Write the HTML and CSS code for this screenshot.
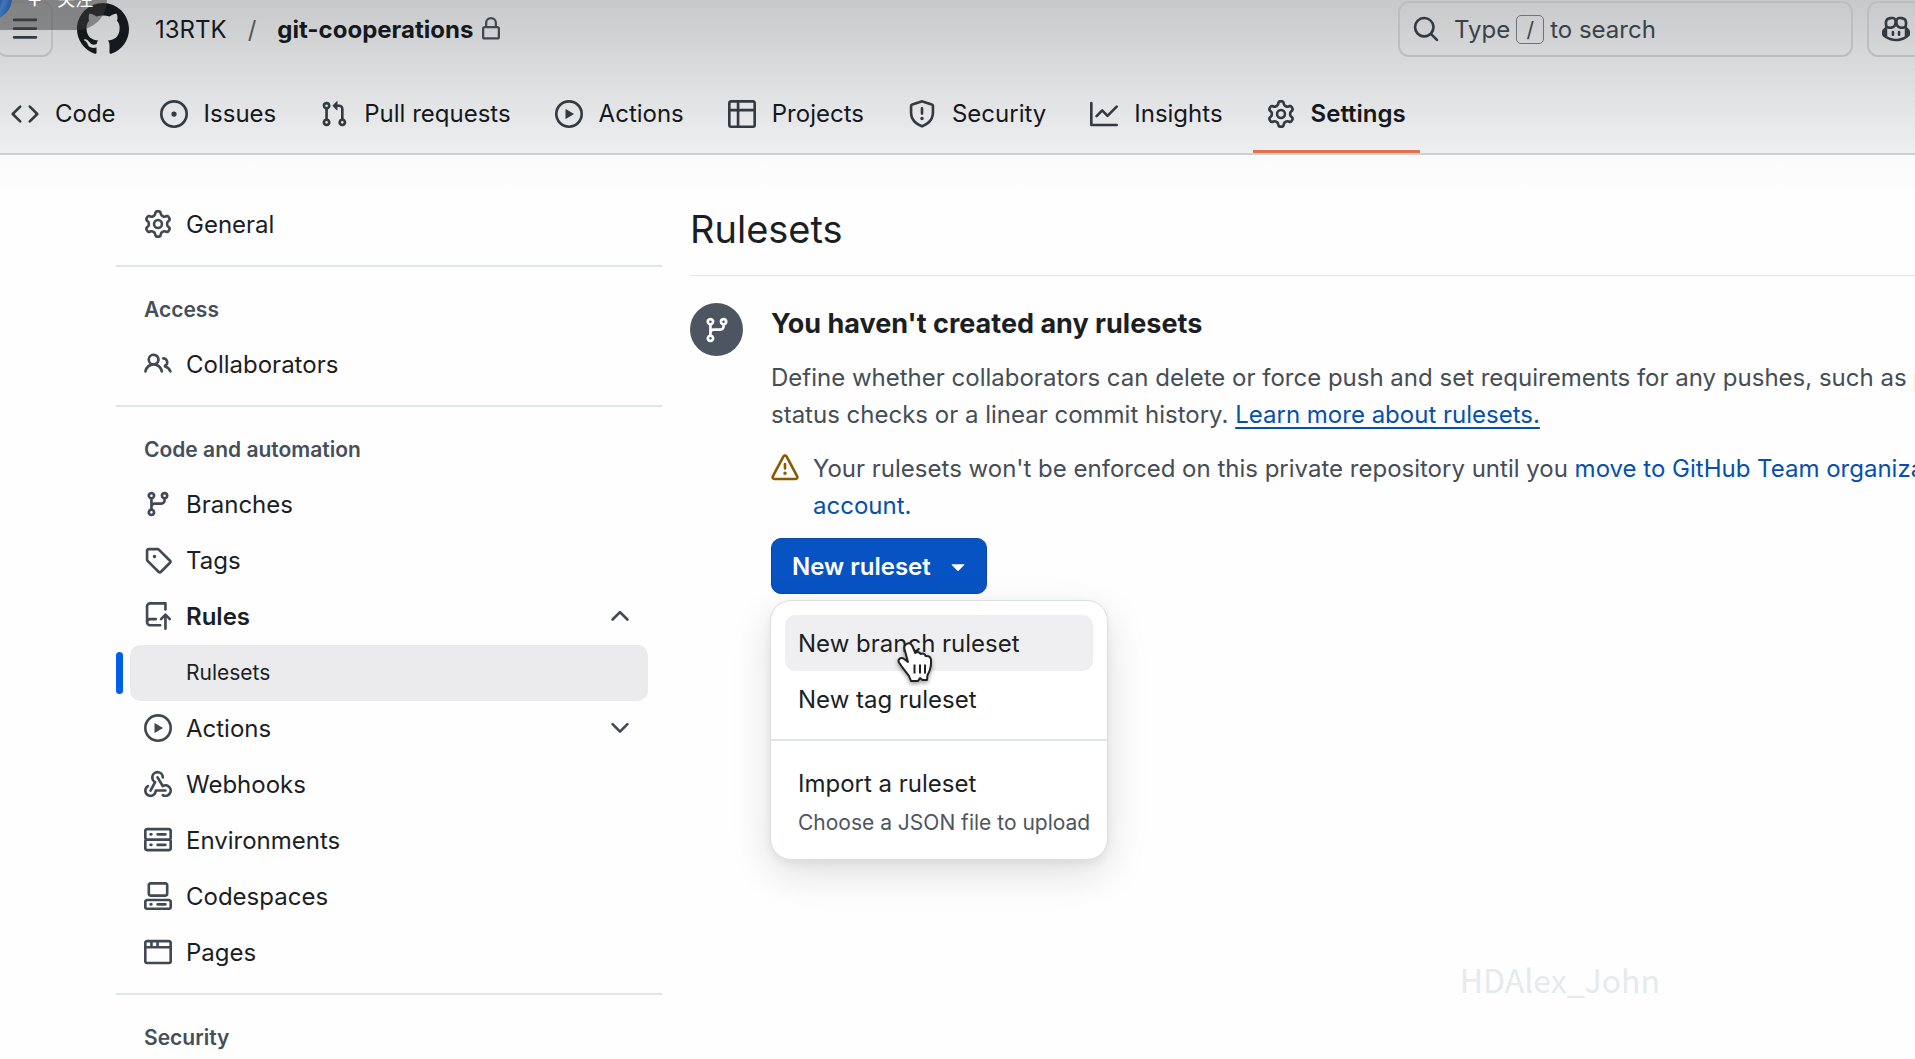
FILE: index.html
```html
<!DOCTYPE html>
<html lang="en">
<head>
<meta charset="utf-8">
<title>Rulesets · 13RTK/git-cooperations</title>
<link rel="stylesheet" href="styles.css">
</head>
<body>
<svg class="sprite" aria-hidden="true">
  <symbol id="gear" viewBox="0 0 16 16"><path d="M8 0a8.2 8.2 0 0 1 .701.031C9.444.095 9.99.645 10.16 1.29l.288 1.107c.018.066.079.158.212.224.231.114.454.243.668.386.123.082.233.09.299.071l1.103-.303c.644-.176 1.392.021 1.82.63.27.385.506.792.704 1.218.315.675.111 1.422-.364 1.891l-.814.806c-.049.048-.098.147-.088.294.016.257.016.515 0 .772-.01.147.038.246.088.294l.814.806c.475.469.679 1.216.364 1.891a7.977 7.977 0 0 1-.704 1.217c-.428.61-1.176.807-1.82.63l-1.102-.302c-.067-.019-.177-.011-.3.071a5.909 5.909 0 0 1-.668.386c-.133.066-.194.158-.211.224l-.29 1.106c-.168.646-.715 1.196-1.458 1.26a8.006 8.006 0 0 1-1.402 0c-.743-.064-1.289-.614-1.458-1.26l-.289-1.106c-.018-.066-.079-.158-.212-.224a5.738 5.738 0 0 1-.668-.386c-.123-.082-.233-.09-.299-.071l-1.103.303c-.644.176-1.392-.021-1.82-.63a8.12 8.12 0 0 1-.704-1.218c-.315-.675-.111-1.422.363-1.891l.815-.806c.05-.048.098-.147.088-.294a6.214 6.214 0 0 1 0-.772c.01-.147-.038-.246-.088-.294l-.815-.806C.635 6.045.431 5.298.746 4.623a7.92 7.92 0 0 1 .704-1.217c.428-.61 1.176-.807 1.82-.63l1.102.302c.067.019.177.011.3-.071.214-.143.437-.272.668-.386.133-.066.194-.158.211-.224l.29-1.106C6.009.645 6.556.095 7.299.03 7.53.01 7.764 0 8 0Zm-.571 1.525c-.036.003-.108.036-.137.146l-.289 1.105c-.147.561-.549.967-.998 1.189-.173.086-.34.183-.5.29-.417.278-.97.423-1.529.27l-1.103-.303c-.109-.03-.175.016-.195.045-.22.312-.412.644-.573.99-.014.031-.021.11.059.19l.815.806c.411.406.562.957.53 1.456a4.709 4.709 0 0 0 0 .582c.032.499-.119 1.05-.53 1.456l-.815.806c-.081.08-.073.159-.059.19.162.346.353.677.573.989.02.03.085.076.195.046l1.102-.303c.56-.153 1.113-.008 1.53.27.161.107.328.204.501.29.447.222.85.629.997 1.189l.289 1.105c.029.109.101.143.137.146a6.6 6.6 0 0 0 1.142 0c.036-.003.108-.036.137-.146l.289-1.105c.147-.561.549-.967.998-1.189.173-.086.34-.183.5-.29.417-.278.97-.423 1.529-.27l1.103.303c.109.029.175-.016.195-.045.22-.313.411-.644.573-.99.014-.031.021-.11-.059-.19l-.815-.806c-.411-.406-.562-.957-.53-1.456a4.709 4.709 0 0 0 0-.582c-.032-.499.119-1.05.53-1.456l.815-.806c.081-.08.073-.159.059-.19a6.464 6.464 0 0 0-.573-.989c-.02-.03-.085-.076-.195-.046l-1.102.303c-.56.153-1.113.008-1.53-.27a4.44 4.44 0 0 0-.501-.29c-.447-.222-.85-.629-.997-1.189l-.289-1.105c-.029-.11-.101-.143-.137-.146a6.6 6.6 0 0 0-1.142 0ZM11 8a3 3 0 1 1-6 0 3 3 0 0 1 6 0ZM9.5 8a1.5 1.5 0 1 0-3.001.001A1.5 1.5 0 0 0 9.5 8Z"/></symbol>
  <symbol id="mark" viewBox="0 0 16 16"><path d="M8 0c4.42 0 8 3.58 8 8a8.013 8.013 0 0 1-5.45 7.59c-.4.08-.55-.17-.55-.38 0-.27.01-1.13.01-2.2 0-.75-.25-1.23-.54-1.48 1.78-.2 3.65-.88 3.65-3.95 0-.88-.31-1.59-.82-2.15.08-.2.36-1.02-.08-2.12 0 0-.67-.22-2.2.82-.64-.18-1.32-.27-2-.27-.68 0-1.36.09-2 .27-1.53-1.03-2.2-.82-2.2-.82-.44 1.1-.16 1.92-.08 2.12-.51.56-.82 1.28-.82 2.15 0 3.06 1.86 3.75 3.64 3.95-.23.2-.44.55-.51 1.07-.46.21-1.61.55-2.33-.66-.15-.24-.6-.83-1.23-.82-.67.01-.27.38.01.53.34.19.73.9.82 1.13.16.45.68 1.31 2.69.94 0 .67.01 1.3.01 1.49 0 .21-.15.45-.55.38A7.995 7.995 0 0 1 0 8c0-4.42 3.58-8 8-8Z"/></symbol>
  <symbol id="lock" viewBox="0 0 16 16"><path d="M4 4a4 4 0 0 1 8 0v2h.25c.966 0 1.75.784 1.75 1.75v5.5A1.75 1.75 0 0 1 12.25 15h-8.5A1.75 1.75 0 0 1 2 13.25v-5.5C2 6.784 2.784 6 3.75 6H4Zm8.25 3.5h-8.5a.25.25 0 0 0-.25.25v5.5c0 .138.112.25.25.25h8.5a.25.25 0 0 0 .25-.25v-5.5a.25.25 0 0 0-.25-.25ZM10.5 6V4a2.5 2.5 0 1 0-5 0v2Z"/></symbol>
  <symbol id="menu" viewBox="0 0 16 16"><path d="M1 2.75A.75.75 0 0 1 1.75 2h12.5a.75.75 0 0 1 0 1.500H1.750A.75.75 0 0 1 1 2.750Zm0 5A.75.75 0 0 1 1.750 7h12.500a.75.75 0 0 1 0 1.500H1.750A.75.75 0 0 1 1 7.750ZM1.750 12h12.500a.75.75 0 0 1 0 1.500H1.750a.75.75 0 0 1 0-1.500Z"/></symbol>
  <symbol id="search" viewBox="0 0 16 16"><path d="M10.680 11.740a6 6 0 0 1-7.922-8.982 6 6 0 0 1 8.982 7.922l3.040 3.040a.749.749 0 0 1-.326 1.275.749.749 0 0 1-.734-.215ZM11.500 7a4.499 4.499 0 1 0-8.997 0A4.499 4.499 0 0 0 11.500 7Z"/></symbol>
  <symbol id="copilot" viewBox="0 0 16 16"><path d="M7.998 15.035c-4.562 0-7.873-2.914-7.998-3.749V9.338c.085-.628.677-1.686 1.588-2.065.013-.07.024-.143.036-.218.029-.183.060-.384.126-.612-.201-.508-.254-1.084-.254-1.656 0-.87.128-1.769.693-2.484.579-.733 1.494-1.124 2.724-1.261 1.206-.134 2.262.034 2.944.765.050.053.096.108.139.165.044-.057.094-.112.143-.165.682-.731 1.738-.899 2.944-.765 1.230.137 2.145.528 2.724 1.261.566.715.693 1.614.693 2.484 0 .572-.053 1.148-.254 1.656.066.228.098.429.126.612.012.076.024.148.037.218.924.385 1.522 1.471 1.591 2.095v1.872c0 .766-3.351 3.795-8.002 3.795Zm0-1.485c2.280 0 4.584-1.110 5.002-1.433V7.862l-.023-.116c-.490.210-1.075.291-1.727.291-1.146 0-2.059-.327-2.710-.991A3.222 3.222 0 0 1 8 6.303a3.240 3.240 0 0 1-.544.743c-.650.664-1.563.991-2.710.991-.652 0-1.236-.081-1.727-.291l-.023.116v4.255c.419.323 2.722 1.433 5.002 1.433ZM6.762 2.830c-.193-.206-.637-.413-1.682-.297-1.019.113-1.479.404-1.713.700-.247.312-.369.789-.369 1.554 0 .793.129 1.171.308 1.371.162.181.519.379 1.442.379.853 0 1.339-.235 1.638-.540.315-.322.527-.827.617-1.553.117-.935-.037-1.395-.241-1.614Zm4.155-.297c-1.044-.116-1.488.091-1.681.297-.204.219-.359.679-.242 1.614.091.726.303 1.231.618 1.553.299.305.784.540 1.638.540.922 0 1.280-.198 1.442-.379.179-.200.308-.578.308-1.371 0-.765-.123-1.242-.370-1.554-.233-.296-.693-.587-1.713-.700ZM6.250 9.037a.75.75 0 0 1 .75.75v1.501a.75.75 0 0 1-1.500 0V9.787a.75.75 0 0 1 .75-.75Zm4.250.75v1.501a.75.75 0 0 1-1.500 0V9.787a.75.75 0 0 1 1.500 0Z"/></symbol>
  <symbol id="code" viewBox="0 0 16 16"><path d="m11.280 3.220 4.250 4.250a.75.75 0 0 1 0 1.060l-4.250 4.250a.749.749 0 0 1-1.275-.326.749.749 0 0 1 .215-.734L13.940 8l-3.720-3.720a.749.749 0 0 1 .326-1.275.749.749 0 0 1 .734.215Zm-6.560 0a.751.751 0 0 1 1.042.018.751.751 0 0 1 .018 1.042L2.060 8l3.720 3.720a.749.749 0 0 1-.326 1.275.749.749 0 0 1-.734-.215L.470 8.530a.75.75 0 0 1 0-1.060Z"/></symbol>
  <symbol id="issue" viewBox="0 0 16 16"><path d="M8 9.500a1.500 1.500 0 1 0 0-3 1.500 1.500 0 0 0 0 3Z"/><path d="M8 0a8 8 0 1 1 0 16A8 8 0 0 1 8 0ZM1.500 8a6.500 6.500 0 1 0 13 0 6.500 6.500 0 0 0-13 0Z"/></symbol>
  <symbol id="pull" viewBox="0 0 16 16"><path d="M1.500 3.250a2.250 2.250 0 1 1 3 2.122v5.256a2.251 2.251 0 1 1-1.500 0V5.372A2.250 2.250 0 0 1 1.500 3.250Zm5.677-.177L9.573.677A.25.25 0 0 1 10 .854V2.500h1A2.500 2.500 0 0 1 13.500 5v5.628a2.251 2.251 0 1 1-1.500 0V5a1 1 0 0 0-1-1h-1v1.646a.25.25 0 0 1-.427.177L7.177 3.427a.25.25 0 0 1 0-.354ZM3.750 2.500a.75.75 0 1 0 0 1.500.75.75 0 0 0 0-1.500Zm0 9.500a.75.75 0 1 0 0 1.500.75.75 0 0 0 0-1.500Zm8.250.75a.75.75 0 1 0 1.500 0 .75.75 0 0 0-1.500 0Z"/></symbol>
  <symbol id="play" viewBox="0 0 16 16"><path d="M8 0a8 8 0 1 1 0 16A8 8 0 0 1 8 0ZM1.500 8a6.500 6.500 0 1 0 13 0 6.500 6.500 0 0 0-13 0Zm4.879-2.773 4.264 2.559a.25.25 0 0 1 0 .428l-4.264 2.559A.25.25 0 0 1 6 10.559V5.442a.25.25 0 0 1 .379-.215Z"/></symbol>
  <symbol id="table" viewBox="0 0 16 16"><path d="M0 1.750C0 .784.784 0 1.750 0h12.500C15.216 0 16 .784 16 1.750v12.500A1.750 1.750 0 0 1 14.250 16H1.750A1.750 1.750 0 0 1 0 14.250ZM6.500 6.500v8h7.750a.25.25 0 0 0 .25-.25V6.500Zm8-1.500V1.750a.25.25 0 0 0-.25-.25H6.500V5Zm-13 1.500v7.750c0 .138.112.25.25.25H5v-8ZM5 5V1.500H1.750a.25.25 0 0 0-.25.25V5Z"/></symbol>
  <symbol id="shield" viewBox="0 0 16 16"><path d="M7.467.133a1.748 1.748 0 0 1 1.066 0l5.250 1.680A1.750 1.750 0 0 1 15 3.480V7c0 1.566-.320 3.182-1.303 4.682-.983 1.498-2.585 2.813-5.032 3.855a1.697 1.697 0 0 1-1.330 0c-2.447-1.042-4.049-2.357-5.032-3.855C1.320 10.182 1 8.566 1 7V3.480a1.750 1.750 0 0 1 1.217-1.667Zm.610 1.429a.25.25 0 0 0-.153 0l-5.250 1.680a.25.25 0 0 0-.174.238V7c0 1.358.275 2.666 1.057 3.860.784 1.194 2.121 2.340 4.366 3.297a.196.196 0 0 0 .154 0c2.245-.956 3.582-2.104 4.366-3.298C13.225 9.666 13.500 8.360 13.500 7V3.480a.251.251 0 0 0-.174-.237l-5.250-1.680ZM8.750 4.750v3a.75.75 0 0 1-1.500 0v-3a.75.75 0 0 1 1.500 0ZM9 10.500a1 1 0 1 1-2 0 1 1 0 0 1 2 0Z"/></symbol>
  <symbol id="graph" viewBox="0 0 16 16"><path d="M1.500 1.750V13.500h13.750a.75.75 0 0 1 0 1.500H.75a.75.75 0 0 1-.75-.75V1.750a.75.75 0 0 1 1.500 0Zm14.280 2.530-5.250 5.250a.75.75 0 0 1-1.060 0L7 7.060 4.280 9.780a.751.751 0 0 1-1.042-.018.751.751 0 0 1-.018-1.042l3.250-3.250a.75.75 0 0 1 1.060 0L10 7.940l4.720-4.720a.751.751 0 0 1 1.042.018.751.751 0 0 1 .018 1.042Z"/></symbol>
  <symbol id="people" viewBox="0 0 16 16"><path d="M2 5.500a3.500 3.500 0 1 1 5.898 2.549 5.508 5.508 0 0 1 3.034 4.084.75.75 0 1 1-1.482.235 4 4 0 0 0-7.900 0 .75.75 0 0 1-1.482-.236A5.507 5.507 0 0 1 3.102 8.050 3.493 3.493 0 0 1 2 5.500ZM11 4a3.001 3.001 0 0 1 2.220 5.018 5.010 5.010 0 0 1 2.560 3.012.749.749 0 0 1-.885.954.752.752 0 0 1-.549-.514 3.507 3.507 0 0 0-2.522-2.372.75.75 0 0 1-.574-.730v-.352a.75.75 0 0 1 .416-.672A1.500 1.500 0 0 0 11 5.500.75.75 0 0 1 11 4Zm-5.500-.5a2 2 0 1 0-.001 3.999A2 2 0 0 0 5.500 3.500Z"/></symbol>
  <symbol id="branch" viewBox="0 0 16 16"><path d="M9.500 3.250a2.250 2.250 0 1 1 3 2.122V6A2.500 2.500 0 0 1 10 8.500H6a1 1 0 0 0-1 1v1.128a2.251 2.251 0 1 1-1.500 0V5.372a2.250 2.250 0 1 1 1.500 0v1.836A2.493 2.493 0 0 1 6 7h4a1 1 0 0 0 1-1v-.628A2.250 2.250 0 0 1 9.500 3.250Zm-6 0a.75.75 0 1 0 1.500 0 .75.75 0 0 0-1.500 0Zm8.250-.75a.75.75 0 1 0 0 1.500.75.75 0 0 0 0-1.500ZM4.250 12a.75.75 0 1 0 0 1.500.75.75 0 0 0 0-1.500Z"/></symbol>
  <symbol id="tag" viewBox="0 0 16 16"><path d="M1 7.775V2.750C1 1.784 1.784 1 2.750 1h5.025c.464 0 .910.184 1.238.513l6.250 6.250a1.750 1.750 0 0 1 0 2.474l-5.026 5.026a1.750 1.750 0 0 1-2.474 0l-6.250-6.250A1.752 1.752 0 0 1 1 7.775Zm1.500 0c0 .066.026.130.073.177l6.250 6.250a.25.25 0 0 0 .354 0l5.025-5.025a.25.25 0 0 0 0-.354l-6.250-6.250a.25.25 0 0 0-.177-.073H2.750a.25.25 0 0 0-.25.25ZM6 5a1 1 0 1 1 0 2 1 1 0 0 1 0-2Z"/></symbol>
  <symbol id="repo-push" viewBox="0 0 16 16"><path d="M1 2.500A2.500 2.500 0 0 1 3.500 0h8.750a.75.75 0 0 1 .75.75v3.500a.75.75 0 0 1-1.500 0V1.500h-8a1 1 0 0 0-1 1v6.708A2.493 2.493 0 0 1 3.500 9h3.250a.75.75 0 0 1 0 1.500H3.500a1 1 0 0 0 0 2h5.750a.75.75 0 0 1 0 1.500H3.500A2.500 2.500 0 0 1 1 11.500Zm13.230 7.790h-.001l-1.224-1.224v6.184a.75.75 0 0 1-1.500 0V9.066L10.280 10.290a.75.75 0 0 1-1.060-1.061l2.505-2.504a.75.75 0 0 1 1.060 0L15.290 9.230a.751.751 0 0 1-.018 1.042.751.751 0 0 1-1.042.018Z"/></symbol>
  <symbol id="webhook" viewBox="0 0 16 16"><path d="M5.500 4.250a2.250 2.250 0 0 1 4.500 0 .75.75 0 0 0 1.500 0 3.750 3.750 0 1 0-6.140 2.889l-2.272 4.258a.75.75 0 0 0 1.324.706L7 7.250a.75.75 0 0 0-.309-1.015A2.250 2.250 0 0 1 5.500 4.250Z"/><path d="M7.364 3.607a.75.75 0 0 1 1.030.257l2.608 4.349a3.750 3.750 0 1 1-.628 6.785.75.75 0 0 1 .752-1.299 2.250 2.250 0 1 0-.033-3.880.75.75 0 0 1-1.030-.256L7.107 4.636a.75.75 0 0 1 .257-1.030Z"/><path d="M2.900 8.776A.75.75 0 0 1 2.625 9.800 2.250 2.250 0 1 0 6 11.750a.75.75 0 0 1 .75-.751h5.500a.75.75 0 0 1 0 1.500H7.425a3.751 3.751 0 1 1-5.550-3.998.75.75 0 0 1 1.024.274Z"/></symbol>
  <symbol id="server" viewBox="0 0 16 16"><path d="M1.750 1h12.500c.966 0 1.750.784 1.750 1.750v4c0 .372-.116.717-.314 1 .198.283.314.628.314 1v4a1.750 1.750 0 0 1-1.750 1.750H1.750A1.750 1.750 0 0 1 0 12.750v-4c0-.358.109-.707.314-1a1.739 1.739 0 0 1-.314-1v-4C0 1.784.784 1 1.750 1ZM1.500 2.750v4c0 .138.112.25.25.25h12.500a.25.25 0 0 0 .25-.25v-4a.25.25 0 0 0-.25-.25H1.750a.25.25 0 0 0-.25.25Zm.25 5.750a.25.25 0 0 0-.25.25v4c0 .138.112.25.25.25h12.500a.25.25 0 0 0 .25-.25v-4a.25.25 0 0 0-.25-.25ZM7 4.750A.75.75 0 0 1 7.750 4h4.500a.75.75 0 0 1 0 1.500h-4.500A.75.75 0 0 1 7 4.750ZM7.750 10h4.500a.75.75 0 0 1 0 1.500h-4.500a.75.75 0 0 1 0-1.500ZM3 4.750A.75.75 0 0 1 3.750 4h.5a.75.75 0 0 1 0 1.500h-.5A.75.75 0 0 1 3 4.750ZM3.750 10h.5a.75.75 0 0 1 0 1.500h-.5a.75.75 0 0 1 0-1.500Z"/></symbol>
  <symbol id="codespaces" viewBox="0 0 16 16"><path d="M0 11.250c0-.966.784-1.750 1.750-1.750h12.500c.966 0 1.750.784 1.750 1.750v3A1.750 1.750 0 0 1 14.250 16H1.750A1.750 1.750 0 0 1 0 14.250Zm2-9.500C2 .784 2.784 0 3.750 0h8.500C13.216 0 14 .784 14 1.750v5a1.750 1.750 0 0 1-1.750 1.750h-8.500A1.750 1.750 0 0 1 2 6.750Zm1.750-.25a.25.25 0 0 0-.25.25v5c0 .138.112.25.25.25h8.500a.25.25 0 0 0 .25-.25v-5a.25.25 0 0 0-.25-.25Zm-2 9.500a.25.25 0 0 0-.25.25v3c0 .138.112.25.25.25h12.500a.25.25 0 0 0 .25-.25v-3a.25.25 0 0 0-.25-.25Z"/><path d="M7 12.750a.75.75 0 0 1 .75-.75h4.500a.75.75 0 0 1 0 1.500h-4.500a.75.75 0 0 1-.75-.75Zm-4 0a.75.75 0 0 1 .75-.75h.5a.75.75 0 0 1 0 1.500h-.5a.75.75 0 0 1-.75-.75Z"/></symbol>
  <symbol id="browser" viewBox="0 0 16 16"><path d="M0 2.750C0 1.784.784 1 1.750 1h12.500c.966 0 1.750.784 1.750 1.750v10.500A1.750 1.750 0 0 1 14.250 15H1.750A1.750 1.750 0 0 1 0 13.250ZM14.500 6h-13v7.250c0 .138.112.25.25.25h12.500a.25.25 0 0 0 .25-.25Zm-6-3.500v2h6V2.750a.25.25 0 0 0-.25-.25ZM5 2.500v2h2v-2Zm-3.250 0a.25.25 0 0 0-.25.25V4.500h2v-2Z"/></symbol>
  <symbol id="chevron-down" viewBox="0 0 16 16"><path d="M12.780 5.220a.749.749 0 0 1 0 1.060l-4.250 4.250a.749.749 0 0 1-1.060 0L3.220 6.280a.749.749 0 1 1 1.060-1.060L8 8.939l3.720-3.719a.749.749 0 0 1 1.060 0Z"/></symbol>
  <symbol id="chevron-up" viewBox="0 0 16 16"><path d="M3.220 10.530a.749.749 0 0 1 0-1.060l4.250-4.250a.749.749 0 0 1 1.060 0l4.250 4.250a.749.749 0 1 1-1.060 1.060L8 6.811 4.280 10.530a.749.749 0 0 1-1.060 0Z"/></symbol>
  <symbol id="alert" viewBox="0 0 16 16"><path d="M6.457 1.047c.659-1.234 2.427-1.234 3.086 0l6.082 11.378A1.750 1.750 0 0 1 14.082 15H1.918a1.750 1.750 0 0 1-1.543-2.575Zm1.763.707a.25.25 0 0 0-.440 0L1.698 13.132a.25.25 0 0 0 .220.368h12.164a.25.25 0 0 0 .220-.368Zm.530 3.996v2.500a.75.75 0 0 1-1.500 0v-2.500a.75.75 0 0 1 1.500 0ZM9 11a1 1 0 1 1-2 0 1 1 0 0 1 2 0Z"/></symbol>
  <symbol id="caret" viewBox="0 0 16 16"><path d="m4.427 7.427 3.396 3.396a.25.25 0 0 0 .354 0l3.396-3.396A.25.25 0 0 0 11.396 7H4.604a.25.25 0 0 0-.177.427Z"/></symbol>
</svg>

<header class="header">
  <div class="topbar">
    <button class="square-button" type="button" aria-label="Open menu"><svg class="icon"><use href="#menu"/></svg></button>
    <a class="logo" href="#" aria-label="Homepage"><svg><use href="#mark"/></svg></a>
    <nav class="crumbs" aria-label="Breadcrumb">
      <a href="#">13RTK</a>
      <span class="slash">/</span>
      <a class="repo" href="#">git-cooperations</a>
      <svg class="lock"><use href="#lock"/></svg>
    </nav>
    <button class="search" type="button"><svg class="icon"><use href="#search"/></svg><span>Type</span><kbd>/</kbd><span>to search</span></button>
    <button class="square-button copilot" type="button" aria-label="Copilot"><svg class="icon"><use href="#copilot"/></svg></button>
  </div>
  <nav class="tabs" aria-label="Repository">
    <a href="#"><svg class="icon"><use href="#code"/></svg>Code</a>
    <a href="#"><svg class="icon"><use href="#issue"/></svg>Issues</a>
    <a href="#"><svg class="icon"><use href="#pull"/></svg>Pull requests</a>
    <a href="#"><svg class="icon"><use href="#play"/></svg>Actions</a>
    <a href="#"><svg class="icon"><use href="#table"/></svg>Projects</a>
    <a href="#"><svg class="icon"><use href="#shield"/></svg>Security</a>
    <a href="#"><svg class="icon"><use href="#graph"/></svg>Insights</a>
    <a class="current" href="#" aria-current="page"><svg class="icon"><use href="#gear"/></svg>Settings</a>
  </nav>
</header>

<div class="layout">
  <nav class="sidebar" aria-label="Settings">
    <ul>
      <li><a class="row" href="#"><svg class="icon"><use href="#gear"/></svg>General</a></li>
    </ul>
    <hr>
    <h2>Access</h2>
    <ul>
      <li><a class="row" href="#"><svg class="icon"><use href="#people"/></svg>Collaborators</a></li>
    </ul>
    <hr>
    <h2>Code and automation</h2>
    <ul>
      <li><a class="row" href="#"><svg class="icon"><use href="#branch"/></svg>Branches</a></li>
      <li><a class="row" href="#"><svg class="icon"><use href="#tag"/></svg>Tags</a></li>
      <li><button class="row open" type="button" aria-expanded="true"><svg class="icon"><use href="#repo-push"/></svg>Rules<svg class="icon chevron"><use href="#chevron-up"/></svg></button></li>
      <li class="selected"><a class="row sub" href="#" aria-current="page">Rulesets</a></li>
      <li><button class="row" type="button" aria-expanded="false"><svg class="icon"><use href="#play"/></svg>Actions<svg class="icon chevron"><use href="#chevron-down"/></svg></button></li>
      <li><a class="row" href="#"><svg class="icon"><use href="#webhook"/></svg>Webhooks</a></li>
      <li><a class="row" href="#"><svg class="icon"><use href="#server"/></svg>Environments</a></li>
      <li><a class="row" href="#"><svg class="icon"><use href="#codespaces"/></svg>Codespaces</a></li>
      <li><a class="row" href="#"><svg class="icon"><use href="#browser"/></svg>Pages</a></li>
    </ul>
    <hr>
    <h2>Security</h2>
  </nav>

  <main class="main">
    <h1>Rulesets</h1>
    <section class="blank">
      <div class="badge"><svg class="icon"><use href="#branch"/></svg></div>
      <div class="content">
        <h2>You haven't created any rulesets</h2>
        <p>Define whether collaborators can delete or force push and set requirements for any pushes, such as passing<br>status checks or a linear commit history. <a class="underlined" href="#">Learn more about rulesets.</a></p>
        <div class="warning">
          <svg class="icon"><use href="#alert"/></svg>
          <p>Your rulesets won't be enforced on this private repository until you <a href="#">move to GitHub Team organization<br>account.</a></p>
        </div>
        <div class="dropdown">
          <button class="primary" type="button" aria-haspopup="true" aria-expanded="true">New ruleset<svg class="icon"><use href="#caret"/></svg></button>
          <div class="menu" role="menu">
            <button class="item active" type="button" role="menuitem">New branch ruleset</button>
            <button class="item" type="button" role="menuitem">New tag ruleset</button>
            <hr>
            <button class="item tall" type="button" role="menuitem">Import a ruleset<small>Choose a JSON file to upload</small></button>
            <svg class="pointer" viewBox="0 0 38 44" aria-hidden="true"><path d="M10 3.500C12 1.500 15 2 16.300 5l3 7c2-1.500 4.500-1 5.200 1 2-1 4.500-.3 5 2 3-.5 5.200 1 5.500 4 .3 6-1 11-3.500 15l-.500 5-4.500 0-2.500-2-2 3h-7l-2-5C10 31 6.500 27 3 21.500c-1.500-3 1.500-5.500 4.500-4l4.500 3.500L8.500 8C8 6 8.500 4.500 10 3.500Z"/><path d="M18.500 23.500v9M24 23.500v9M29 23.500v9"/></svg>
          </div>
        </div>
      </div>
    </section>
  </main>
</div>

<div class="follow"><span class="avatar"></span><span class="plus">+</span><span>关注</span></div>
<div class="watermark">HDAlex_John</div>
</body>
</html>
```

FILE: styles.css
```css
* {
  box-sizing: border-box;
}

body {
  margin: 0;
  overflow: hidden;
  background: linear-gradient(#fafafa, #fefefe 40px) 0 155px no-repeat #fefefe;
  color: #1b1f23;
  font-family: Inter, "Liberation Sans", sans-serif;
  font-size: 24px;
  line-height: 37px;
}

button {
  padding: 0;
  border: 0;
  background: none;
  color: inherit;
  font: inherit;
  text-align: left;
}

a {
  color: #0550ae;
  text-decoration: none;
}

ul {
  margin: 0;
  padding: 0;
  list-style: none;
}

hr {
  height: 2px;
  margin: 0;
  border: 0;
  background: #dfe4e5;
}

.sprite {
  position: absolute;
  width: 0;
  height: 0;
}

.icon {
  flex: none;
  width: 28px;
  height: 28px;
  fill: #414a53;
}

/* Header */

.header {
  padding-top: 1px;
  border-bottom: 2px solid #cbd1d3;
  background: linear-gradient(#c8c9cb, #dcdddf 50%, #eeeff1);
}

.header a {
  color: #15181c;
}

.header .icon {
  fill: #323a42;
}

.topbar {
  display: flex;
  align-items: center;
  height: 56px;
  margin-left: -4px;
}

.square-button {
  display: flex;
  flex: none;
  align-items: center;
  justify-content: center;
  width: 57px;
  height: 56px;
  border: 2px solid #babfc2;
  border-radius: 11px;
}

.logo {
  flex: none;
  height: 52px;
  margin: 0 26px 0 24px;
}

.logo svg {
  width: 52px;
  height: 52px;
  fill: #15181c;
}

.crumbs {
  display: flex;
  align-items: center;
}

.slash {
  margin: 0 21px;
  color: #50575e;
}

.repo {
  font-weight: 700;
}

.lock {
  width: 24px;
  height: 24px;
  margin-left: 6px;
  fill: #41484f;
}

.search {
  display: flex;
  align-items: center;
  gap: 6px;
  width: 455px;
  height: 56px;
  margin: 0 14px 0 auto;
  padding: 0 12px;
  border: 2px solid #babfc2;
  border-radius: 11px;
  color: #3a4249;
}

.search .icon {
  margin-right: 8px;
}

.search kbd {
  width: 28px;
  height: 29px;
  border: 1px solid #6c7379;
  border-radius: 5px;
  font: inherit;
  font-size: 21px;
  line-height: 27px;
  text-align: center;
}

.copilot {
  margin-right: -9px;
}

.tabs {
  display: flex;
  gap: 16px;
  margin: 14px 0 0 -3px;
}

.tabs a {
  display: flex;
  align-items: center;
  gap: 16px;
  height: 82px;
  padding: 6px 14px 0;
  border-bottom: 3px solid transparent;
}

.tabs .current {
  border-color: #e0704f;
  font-weight: 600;
}

/* Layout */

.layout {
  display: grid;
  grid-template-columns: 546px 1fr;
  gap: 28px;
  padding: 42px 0 0 116px;
}

.sidebar hr {
  margin: 12px 0 14px;
}

.sidebar h2 {
  height: 56px;
  margin: 0;
  padding-left: 28px;
  color: #454f59;
  font-size: 21px;
  font-weight: 600;
  line-height: 58px;
}

.row {
  display: flex;
  align-items: center;
  gap: 14px;
  width: calc(100% - 28px);
  height: 56px;
  margin-left: 14px;
  padding: 0 14px 2px;
  border-radius: 10px;
  color: #1b1f23;
}

.open {
  font-weight: 600;
}

.chevron {
  margin-left: auto;
}

.sub {
  padding-left: 56px;
  background: #ebebed;
  font-size: 21px;
}

.selected {
  display: flex;
  align-items: center;
}

.selected::before {
  content: "";
  flex: none;
  width: 7px;
  height: 42px;
  border-radius: 4px;
  background: #0060e8;
}

.selected .row {
  margin-left: 7px;
}

/* Main */

.main {
  min-width: 0;
  white-space: nowrap;
}

.main h1 {
  margin: 0;
  padding: 2px 0 16px;
  border-bottom: 1px solid #dfe6e6;
  font-size: 38px;
  font-weight: 400;
  line-height: 60px;
}

.blank {
  display: flex;
  gap: 28px;
  padding-top: 27px;
}

.badge {
  display: flex;
  flex: none;
  align-items: center;
  justify-content: center;
  width: 53px;
  height: 53px;
  border-radius: 50%;
  background: #4d5660;
}

.badge .icon {
  fill: #fff;
}

.content h2 {
  margin: 0 0 14px;
  font-size: 27px;
  font-weight: 700;
  line-height: 42px;
}

.content p {
  margin: 0;
  color: #454d55;
}

.underlined {
  text-decoration: underline;
  text-decoration-thickness: 2px;
  text-underline-offset: 4px;
}

.warning {
  display: flex;
  gap: 14px;
  margin-top: 17px;
}

.warning .icon {
  margin-top: 4px;
  fill: #8a5a00;
}

.dropdown {
  position: relative;
  margin-top: 14px;
}

.primary {
  display: flex;
  align-items: center;
  gap: 13px;
  height: 56px;
  padding: 0 14px 0 20px;
  border: 1px solid #0a48a8;
  border-radius: 10px;
  background: #0853c4;
  color: #fff;
  font-weight: 600;
}

.primary .icon {
  fill: #fff;
}

.menu {
  position: absolute;
  top: 62px;
  left: -1px;
  width: 338px;
  padding: 14px 0 9px;
  border: 1px solid #dadfe0;
  border-radius: 21px;
  background: #fff;
  box-shadow: 0 14px 42px rgba(0, 0, 0, 0.12), 0 4px 10px rgba(0, 0, 0, 0.06);
}

.menu hr {
  margin: 12px 0 14px;
}

.item {
  display: block;
  width: 308px;
  margin-left: 14px;
  padding: 10px 13px 9px;
  border-radius: 10px;
}

.active {
  background: #efeff1;
}

.tall small {
  display: block;
  margin-top: 2px;
  color: #4d555d;
  font-size: 21px;
}

.pointer {
  position: absolute;
  top: 40px;
  left: 125px;
  width: 38px;
  height: 44px;
  fill: #fff;
  stroke: #222;
  stroke-width: 2;
  stroke-linejoin: round;
  filter: drop-shadow(0 2px 2px rgba(0, 0, 0, 0.4));
}

/* Overlays on top of the page */

.follow {
  position: absolute;
  top: -30px;
  left: -40px;
  display: flex;
  gap: 16px;
  align-items: center;
  width: 147px;
  height: 60px;
  padding-bottom: 4px;
  border-radius: 0 0 30px 0;
  background: rgba(60, 60, 60, 0.5);
  color: #fff;
  font-family: "Noto Sans CJK SC", sans-serif;
  font-size: 18px;
}

.plus {
  font-size: 24px;
}

.avatar {
  width: 52px;
  height: 44px;
  border-radius: 0 22px 22px 0;
  background: linear-gradient(110deg, #12367c 65%, #3f78b8 78%, #173f85);
}

.watermark {
  position: absolute;
  right: 255px;
  bottom: 60px;
  color: #e4ebee;
  font-family: "Noto Sans CJK SC", sans-serif;
  font-size: 32px;
  line-height: 40px;
}
```
